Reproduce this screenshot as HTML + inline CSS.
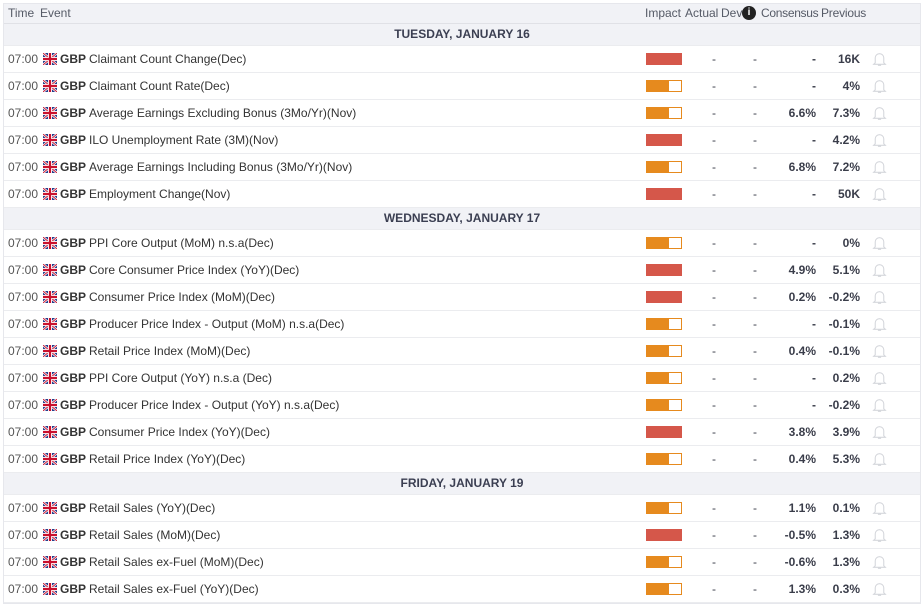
<!DOCTYPE html><html><head><meta charset="utf-8"><style>
body{margin:0;background:#fff;font-family:"Liberation Sans",sans-serif;font-size:12px;color:#3a3d4a;}
.t{position:absolute;left:3px;top:3px;width:916px;border:1px solid #e6e7ec;}
.r{position:relative;height:26px;border-bottom:1px solid #ebecef;background:#fff}
.h{height:19px;background:#f1f2f6;border-bottom:1px solid #e0e1e6;color:#555a66}
.d{height:21px;background:#f1f2f6;text-align:center;font-weight:bold;line-height:21px;color:#3b3f52}
.r span{position:absolute;top:0;line-height:26px;white-space:nowrap}
.h span{line-height:19px}
.tm{left:4px;color:#555}
.fl{left:39px;top:7px!important;width:14px;height:12px}
.cur{left:56px;font-weight:bold;color:#333}
.ev{left:85px;color:#333}
.bar{left:642px;top:7px!important;width:36px;height:12px;box-sizing:border-box}
.hi{background:#d5574a}
.md{background:linear-gradient(90deg,#e68a1e 65%,#fff 65%);border:1px solid #e68a1e}
.a{left:708px}.dv{left:749px}
.c{right:104px;font-weight:bold}.p{right:60px;font-weight:bold}
.b{left:868px;top:5px!important}
</style></head><body><div class="t">
<div class="r h"><span style="left:4px">Time</span><span style="left:36px">Event</span><span style="left:641px">Impact</span><span style="left:681px">Actual</span><span style="left:717px">Dev</span><span style="left:738px;top:2px;width:14px;height:14px;border-radius:7px;background:#222;color:#fff;font-weight:bold;font-size:10px;line-height:14px;text-align:center">i</span><span style="left:757px;letter-spacing:-0.3px">Consensus</span><span style="left:817px;letter-spacing:-0.2px">Previous</span></div>
<div id="body"></div>
</div>
<script>
var flag='<svg class="fl" viewBox="0 0 14 12" style="position:absolute"><rect width="14" height="12" fill="#243e8c"/><path d="M0 0L14 12M14 0L0 12" stroke="#fff" stroke-width="2.4"/><path d="M0 0L14 12M14 0L0 12" stroke="#c8102e" stroke-width="0.9"/><path d="M7 0V12M0 6H14" stroke="#fff" stroke-width="4"/><path d="M7 0V12M0 6H14" stroke="#c8102e" stroke-width="2.2"/></svg>';
var bell='<svg class="b" width="15" height="16" viewBox="0 0 14 15" style="position:absolute"><path d="M3 11V6.5a4 4 0 0 1 8 0V11l1.5 1.5h-11z M5.5 13.5h3" fill="none" stroke="#d5d7dc" stroke-width="1"/></svg>';
var data=[["D","TUESDAY, JANUARY 16"],
["Claimant Count Change(Dec)",1,"-","16K"],["Claimant Count Rate(Dec)",0,"-","4%"],["Average Earnings Excluding Bonus (3Mo/Yr)(Nov)",0,"6.6%","7.3%"],["ILO Unemployment Rate (3M)(Nov)",1,"-","4.2%"],["Average Earnings Including Bonus (3Mo/Yr)(Nov)",0,"6.8%","7.2%"],["Employment Change(Nov)",1,"-","50K"],
["D","WEDNESDAY, JANUARY 17"],
["PPI Core Output (MoM) n.s.a(Dec)",0,"-","0%"],["Core Consumer Price Index (YoY)(Dec)",1,"4.9%","5.1%"],["Consumer Price Index (MoM)(Dec)",1,"0.2%","-0.2%"],["Producer Price Index - Output (MoM) n.s.a(Dec)",0,"-","-0.1%"],["Retail Price Index (MoM)(Dec)",0,"0.4%","-0.1%"],["PPI Core Output (YoY) n.s.a (Dec)",0,"-","0.2%"],["Producer Price Index - Output (YoY) n.s.a(Dec)",0,"-","-0.2%"],["Consumer Price Index (YoY)(Dec)",1,"3.8%","3.9%"],["Retail Price Index (YoY)(Dec)",0,"0.4%","5.3%"],
["D","FRIDAY, JANUARY 19"],
["Retail Sales (YoY)(Dec)",0,"1.1%","0.1%"],["Retail Sales (MoM)(Dec)",1,"-0.5%","1.3%"],["Retail Sales ex-Fuel (MoM)(Dec)",0,"-0.6%","1.3%"],["Retail Sales ex-Fuel (YoY)(Dec)",0,"1.3%","0.3%"]];
var h='';data.forEach(function(d){if(d[0]=="D"){h+='<div class="r d">'+d[1]+'</div>';return;}
h+='<div class="r"><span class="tm">07:00</span>'+flag+'<span class="cur">GBP</span><span class="ev">'+d[0]+'</span><span class="bar '+(d[1]?'hi':'md')+'"></span><span class="a">-</span><span class="dv">-</span><span class="c">'+d[2]+'</span><span class="p">'+d[3]+'</span>'+bell+'</div>';});
document.getElementById('body').innerHTML=h;
</script></body></html>
